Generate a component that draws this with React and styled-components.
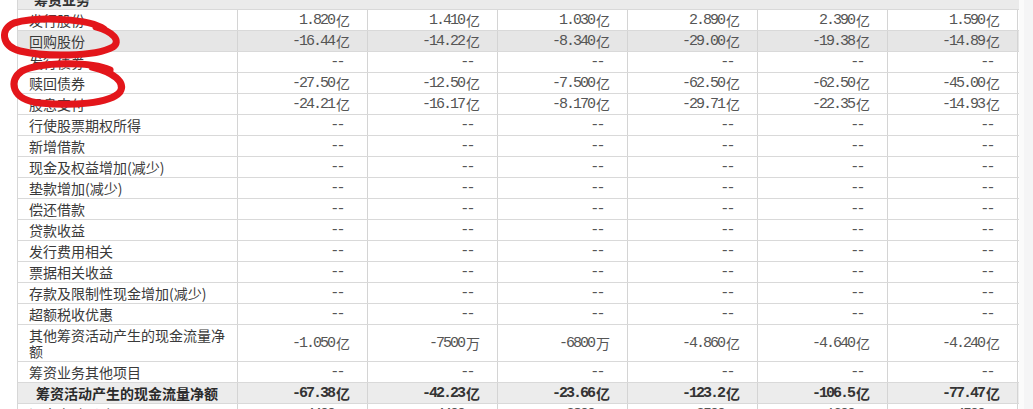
import React from "react";
import styled, { createGlobalStyle, css } from "styled-components";

const Global = createGlobalStyle`
  html, body { margin: 0; padding: 0; background: #ffffff; }
  body { overflow: hidden; width: 1033px; height: 409px; }
  #root { width: 1033px; height: 409px; overflow: hidden; }
`;

const Page = styled.div`
  position: relative;
  display: flex;
  align-items: flex-start;
  width: 1033px;
  height: 409px;
  overflow: hidden;
  padding-left: 17px;
  box-sizing: border-box;
  font-family: "Noto Sans CJK SC", "Noto Sans", sans-serif;
`;

const Table = styled.div`
  display: flex;
  flex-direction: column;
  width: 1001px;
  margin-top: -11px;
  border-left: 1px solid #d7d7d7;
  flex-shrink: 0;
`;

const Gutter = styled.div`
  flex: 1;
  align-self: stretch;
  background: #f5f5f6;
  border-left: 5px solid #fbfbfb;
`;

const Row = styled.div`
  display: grid;
  flex-shrink: 0;
  grid-template-columns: 220px repeat(6, 130px);
  height: ${(p) => (p.$tall ? 37 : 21)}px;
  box-sizing: border-box;
  border-bottom: 1px solid #d9d9d9;
  background: ${(p) => (p.$shade ? p.$shade : "#ffffff")};
`;

const HeaderRow = styled.div`
  flex-shrink: 0;
  height: 21px;
  box-sizing: border-box;
  border-bottom: 1px solid #d9d9d9;
  background: #ebebeb;
  display: flex;
  align-items: center;
  padding-left: 16px;
  font-size: 14px;
  font-weight: 700;
  color: #333333;
`;

const Label = styled.div`
  display: flex;
  align-items: center;
  box-sizing: border-box;
  border-right: 1px solid #d4d4d4;
  padding: 0 4px 0 ${(p) => (p.$bold ? 18 : 11)}px;
  font-size: 14px;
  line-height: 16px;
  color: ${(p) => (p.$bold ? "#2a2a2a" : "#3a3a3a")};
  font-weight: ${(p) => (p.$bold ? 700 : 400)};
  white-space: ${(p) => (p.$wrap ? "normal" : "nowrap")};
  overflow: hidden;
`;

const Cell = styled.div`
  display: flex;
  align-items: center;
  justify-content: flex-end;
  box-sizing: border-box;
  border-right: 1px solid #d4d4d4;
  padding-right: ${(p) => (p.$dash ? 24 : 17)}px;
  color: #555555;
  white-space: nowrap;
  ${(p) =>
    p.$bold &&
    css`
      color: #333333;
    `}
`;

const Num = styled.span`
  font-family: "Liberation Mono", "DejaVu Sans Mono", monospace;
  font-size: 15px;
  letter-spacing: ${(p) => (p.$dash ? "-2.6px" : "-2px")};
  font-weight: ${(p) => (p.$bold ? 700 : 400)};
`;

const Unit = styled.span`
  font-family: "Noto Sans CJK SC", sans-serif;
  font-size: 14px;
  margin-left: 2px;
  font-weight: ${(p) => (p.$bold ? 700 : 400)};
`;

const Marks = styled.svg`
  position: absolute;
  left: 0;
  top: 0;
  pointer-events: none;
`;

const D = "--";
const dashes = [D, D, D, D, D, D];

const rows = [
  { label: "发行股份", values: ["1.820亿", "1.410亿", "1.030亿", "2.890亿", "2.390亿", "1.590亿"] },
  { label: "回购股份", shade: "#e6e6e6", values: ["-16.44亿", "-14.22亿", "-8.340亿", "-29.00亿", "-19.38亿", "-14.89亿"] },
  { label: "发行债券", values: dashes },
  { label: "赎回债券", values: ["-27.50亿", "-12.50亿", "-7.500亿", "-62.50亿", "-62.50亿", "-45.00亿"] },
  { label: "股息支付", values: ["-24.21亿", "-16.17亿", "-8.170亿", "-29.71亿", "-22.35亿", "-14.93亿"] },
  { label: "行使股票期权所得", values: dashes },
  { label: "新增借款", values: dashes },
  { label: "现金及权益增加(减少)", values: dashes },
  { label: "垫款增加(减少)", values: dashes },
  { label: "偿还借款", values: dashes },
  { label: "贷款收益", values: dashes },
  { label: "发行费用相关", values: dashes },
  { label: "票据相关收益", values: dashes },
  { label: "存款及限制性现金增加(减少)", values: dashes },
  { label: "超额税收优惠", values: dashes },
  { label: "其他筹资活动产生的现金流量净额", tall: true, values: ["-1.050亿", "-7500万", "-6800万", "-4.860亿", "-4.640亿", "-4.240亿"] },
  { label: "筹资业务其他项目", values: dashes },
  { label: "筹资活动产生的现金流量净额", bold: true, shade: "#ececec", values: ["-67.38亿", "-42.23亿", "-23.66亿", "-123.2亿", "-106.5亿", "-77.47亿"] },
  { label: "汇率变动影响", values: ["-4400万", "-4400万", "-2800万", "-3500万", "-1600万", "-4500万"] },
];

function Value({ v, bold }) {
  if (v === D) {
    return (
      <Cell $dash>
        <Num $dash>--</Num>
      </Cell>
    );
  }
  const num = v.slice(0, -1);
  const unit = v.slice(-1);
  return (
    <Cell $bold={bold}>
      <Num $bold={bold}>{num}</Num>
      <Unit $bold={bold}>{unit}</Unit>
    </Cell>
  );
}

export default function App() {
  return (
    <>
      <Global />
      <Page>
        <Table>
          <HeaderRow>筹资业务</HeaderRow>
          {rows.map((r) => (
            <Row key={r.label} $tall={r.tall} $shade={r.shade}>
              <Label $bold={r.bold} $wrap={r.tall}>
                {r.label}
              </Label>
              {r.values.map((v, i) => (
                <Value key={i} v={v} bold={r.bold} />
              ))}
            </Row>
          ))}
        </Table>
        <Gutter />
        <Marks width="140" height="115" viewBox="0 0 140 115">
          <path
            d="M 104 29 C 90 19, 40 16, 14 23 C 0 29, 1 46, 20 51 C 45 57, 95 57, 113 47 C 121 41, 114 32, 96 27"
            fill="none"
            stroke="#e3161b"
            strokeWidth="7"
            strokeLinecap="round"
          />
          <path
            d="M 110 70 C 90 61, 40 62, 22 71 C 8 80, 11 100, 40 103 C 70 106, 110 104, 120 92 C 126 82, 113 72, 92 67"
            fill="none"
            stroke="#e3161b"
            strokeWidth="7"
            strokeLinecap="round"
          />
        </Marks>
      </Page>
    </>
  );
}
